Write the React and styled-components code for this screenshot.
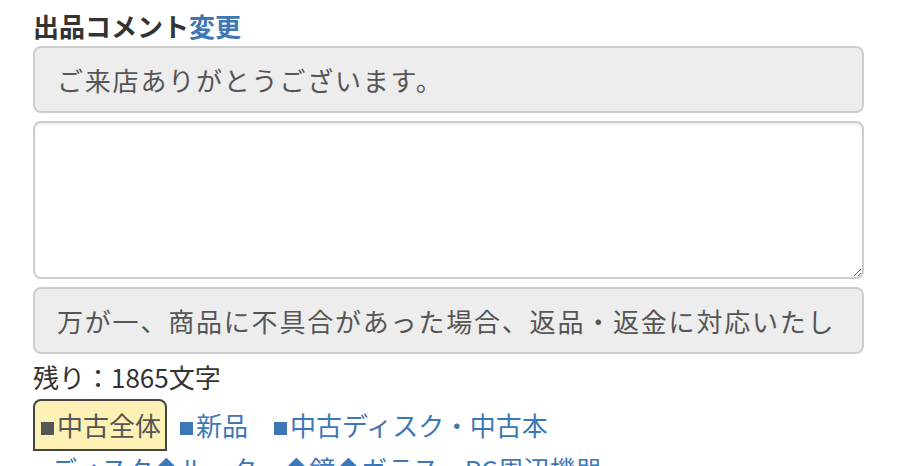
import React from 'react'
import styled, { createGlobalStyle } from 'styled-components';

const GlobalStyle = createGlobalStyle`
    body {
        margin: 0;
        background: #fff;
        font-family: "Noto Sans CJK JP", "Noto Sans", sans-serif;
        color: #333;
    }
`

const categories = [
    '新品',
    '中古ディスク・中古本',
    'ディスク◆ルーター◆鏡◆ガラス・PC周辺機器',
]

const App = () => {
    return (
        <>
            <GlobalStyle />
            <Wrapper>
                <Heading>
                    出品コメント<ChangeLink href="#">変更</ChangeLink>
                </Heading>

                <TemplateField readOnly value="ご来店ありがとうございます。" />
                <Comment />
                <TemplateField readOnly value="万が一、商品に不具合があった場合、返品・返金に対応いたします。" />

                <Remaining>残り：1865文字</Remaining>

                <Tabs>
                    <Tab active><Square />中古全体</Tab>
                    {categories.map((c, i) => (
                        <Tab key={i} wide={i === 0}><Square />{c}</Tab>
                    ))}
                </Tabs>
            </Wrapper>
        </>
    )
}

export default App

const Wrapper = styled.div`
    width: 831px;
    padding: 8px 0 0 33px;
    display: flex;
    flex-direction: column;
`

const Heading = styled.h3`
    margin: 0 0 2px;
    font-size: 26px;
    line-height: 36px;
    font-weight: 700;
    color: #333;
`

const ChangeLink = styled.a`
    color: #3d77b5;
    text-decoration: none;
`

const TemplateField = styled.input`
    box-sizing: border-box;
    width: 100%;
    height: 67px;
    margin: 0;
    padding: 0 22px;
    border: 2px solid #cdcdcd;
    border-radius: 8px;
    background: #ededed;
    color: #555;
    font-family: "Noto Sans CJK JP", sans-serif;
    font-size: 26px;
    letter-spacing: 1.8px;
    outline: none;
`

const Comment = styled.textarea`
    box-sizing: border-box;
    width: 100%;
    height: 158px;
    margin: 8px 0;
    padding: 10px 22px;
    border: 2px solid #cdcdcd;
    border-radius: 8px;
    background: #fff;
    box-shadow: inset 0 2px 3px rgba(0, 0, 0, 0.06);
    font-family: "Noto Sans CJK JP", sans-serif;
    font-size: 26px;
    resize: vertical;
    outline: none;
`

const Remaining = styled.div`
    margin-top: 5px;
    font-size: 26px;
    line-height: 36px;
    color: #333;
`

const Tabs = styled.div`
    display: flex;
    flex-wrap: wrap;
    align-items: center;
    margin-top: 4px;
`

const Tab = styled.a`
    box-sizing: border-box;
    font-size: 26px;
    line-height: 36px;
    white-space: nowrap;
    text-decoration: none;
    color: ${p => p.active ? '#555' : '#3d77b5'};
    background: ${p => p.active ? '#fef1b6' : 'transparent'};
    border: ${p => p.active ? '2px solid #444' : 'none'};
    border-radius: ${p => p.active ? '8px 8px 0 0' : '0'};
    padding: ${p => p.active ? '6px 4px' : '0'};
    margin-right: ${p => p.active ? '11px' : p.wide ? '24px' : '14px'};
`

const Square = styled.span`
    display: inline-block;
    width: 13px;
    height: 13px;
    margin: 0 3px 0 2px;
    background: currentColor;
    vertical-align: 1px;
`
